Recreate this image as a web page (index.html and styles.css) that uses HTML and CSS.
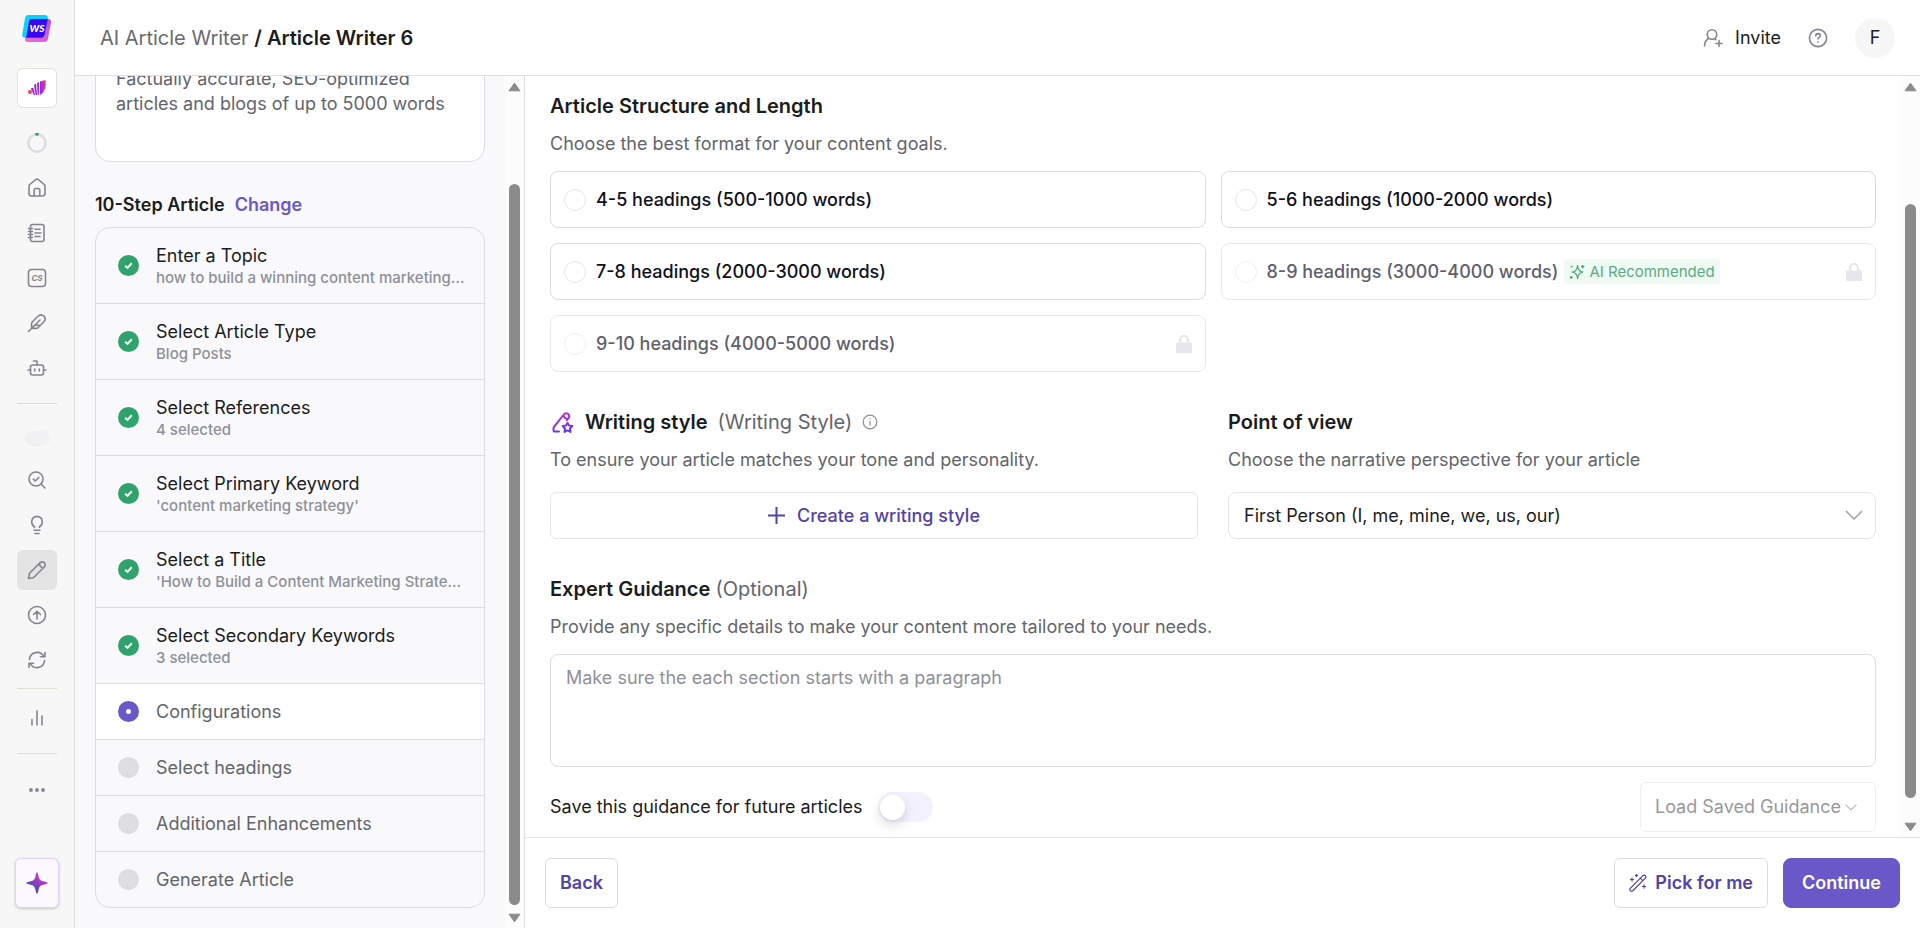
FILE: index.html
```html
<!DOCTYPE html>
<html lang="en">
<head>
<meta charset="utf-8">
<meta name="viewport" content="width=device-width, initial-scale=1">
<title>Article Writer 6</title>
<link rel="stylesheet" href="styles.css">
</head>
<body>
<div class="app">
  <nav class="rail" aria-label="Main">
    <a class="rail-logo" href="#" aria-label="Home page">
      <svg width="30" height="28" viewBox="0 0 30 28">
        <defs>
          <linearGradient id="lp" x1="0" y1="1" x2="1" y2="0"><stop offset="0" stop-color="#f06bd8"/><stop offset="1" stop-color="#c050c8"/></linearGradient>
        </defs>
        <path d="M10 4h16q3.500 0 3 3.500l-3 16q-.5 3.500-4 3.500H6q-3.500 0-3-3.500z" fill="url(#lp)"/>
        <path d="M6.500 0h16q4 0 3.400 3.500l-3 16q-.6 3.300-4 3.300H3.500q-3.800 0-3.200-3.600L3 3.300Q3.600 0 6.500 0z" fill="#0bd0f8"/>
        <path d="M8.500 4h17.300l-3.200 15.700q-.6 3.100-4 3.100H4.200L7 6.500Q7.300 4 8.500 4z" fill="#3a08f5"/>
        <text x="15" y="17" text-anchor="middle" class="logo-text">WS</text>
      </svg>
    </a>
    <a class="rail-brand" href="#" aria-label="Workspace">
      <svg width="18" height="16" viewBox="0 0 18 16">
        <defs><linearGradient id="br" x1="0" y1="0" x2="1" y2="0"><stop offset="0" stop-color="#a020f0"/><stop offset=".4" stop-color="#b52bd0"/><stop offset="1" stop-color="#f0405e"/></linearGradient></defs>
        <circle cx="2" cy="12" r="2" fill="#ee4460"/>
        <path d="M2.800 8.500q2.200-1.500 3.200.5l1 6H6q-1.500-1-1.600-3z" fill="#b02be0"/>
        <path d="M6 4.800l2-1.100 1 11.300H7.700z" fill="#8a22ee"/>
        <path d="M9 3.200l2-1.300v12.600l-1.400.7z" fill="#9a2be6"/>
        <path d="M12 1.400L17.500 0q1 8-1.800 11.500-1.600 2.500-3.700 3.200z" fill="url(#br)"/>
      </svg>
    </a>
    <div class="rail-group">
      <a class="rail-item" href="#" aria-label="Usage">
        <svg width="20" height="20" viewBox="0 0 20 20" fill="none"><circle cx="10" cy="10" r="8.700" stroke="#dddde3" stroke-width="2.600"/><path d="M8.500 1.400q1.500-.2 3 0" stroke="#219e63" stroke-width="2.600"/></svg>
      </a>
      <a class="rail-item" href="#" aria-label="Home">
        <svg class="ico" width="20" height="20" viewBox="0 0 20 20"><path d="M2 8.200q0-1 .8-1.700l5.800-4.800q1.400-1.100 2.800 0l5.800 4.800q.8.700.8 1.700v7.300q0 2.500-2.500 2.500h-11Q2 18 2 15.500zM7.200 18v-6q0-1.500 1.500-1.500h2.600q1.500 0 1.500 1.500v6"/></svg>
      </a>
      <a class="rail-item" href="#" aria-label="Notes">
        <svg class="ico" width="20" height="20" viewBox="0 0 20 20"><rect x="3.500" y="1.500" width="13.500" height="17" rx="2"/><path d="M1.500 5.500h4M1.500 8.500h4M1.500 11.500h4M1.500 14.500h4M8 6.300h5M8 10h6M8 13.500h5"/></svg>
      </a>
      <a class="rail-item" href="#" aria-label="Content strategy">
        <svg width="20" height="20" viewBox="0 0 20 20"><rect class="ico" x="1.500" y="1.500" width="17" height="17" rx="3"/><text x="10" y="13" text-anchor="middle" class="cs-text">CS</text></svg>
      </a>
      <a class="rail-item" href="#" aria-label="Write">
        <svg class="ico" width="20" height="20" viewBox="0 0 20 20"><path d="M1.500 18.500L13 7M4.600 15.400v-4.900q0-.9.600-1.500l6-6q3-2.400 5.700.1 2.400 2.800.1 5.700l-6 6q-.6.600-1.500.6zM7.500 12.300h6"/></svg>
      </a>
      <a class="rail-item" href="#" aria-label="Agent">
        <svg class="ico" width="20" height="20" viewBox="0 0 20 20"><rect x="3.500" y="7" width="13" height="10" rx="2"/><path d="M10 7V3H6.500M1 12h2.500M16.500 12H19M7.700 11v2M12.300 11v2"/></svg>
      </a>
    </div>
    <hr class="rail-rule">
    <div class="rail-pill"></div>
    <div class="rail-group">
      <a class="rail-item" href="#" aria-label="Audit">
        <svg class="ico" width="20" height="20" viewBox="0 0 20 20"><circle cx="9" cy="9" r="7"/><path d="M14 14l4 4M6.300 9.200l2 1.800 3.500-3.500"/></svg>
      </a>
      <a class="rail-item" href="#" aria-label="Ideas">
        <svg class="ico" width="20" height="20" viewBox="0 0 20 20"><path d="M7.500 12.500V11.800Q4.500 10 4.700 6.500 5.300 1.600 10 1.400q4.700.2 5.300 5.100.2 3.500-2.800 5.300v.7M7 15.200h6M8 18.500h4"/></svg>
      </a>
      <a class="rail-item rail-item-active" href="#" aria-label="Article writer">
        <svg class="ico" width="20" height="20" viewBox="0 0 20 20"><path d="M1.500 18.500l.8-4.300q.1-.8.700-1.400L13.200 2.600q2.100-1.600 4.100.1 1.700 2 .1 4.100L7.200 17q-.6.600-1.400.7zM12.500 3.500q.2 4 4 4.200"/></svg>
      </a>
      <a class="rail-item" href="#" aria-label="Publish">
        <svg class="ico" width="20" height="20" viewBox="0 0 20 20"><circle cx="10" cy="10" r="8.500"/><path d="M10 14V6.500M6.500 9.500L10 6.300l3.500 3.200"/></svg>
      </a>
      <a class="rail-item" href="#" aria-label="Refresh">
        <svg class="ico" width="20" height="20" viewBox="0 0 20 20"><path d="M2.500 9.500A7.600 7.600 0 0 1 16.800 6.500M18 2.500v4.300h-4.500M17.500 10.500A7.600 7.600 0 0 1 3.200 13.500M2 17.500v-4.300h4.500"/></svg>
      </a>
    </div>
    <hr class="rail-rule rail-rule-tight">
    <a class="rail-item" href="#" aria-label="Analytics">
      <svg class="ico" width="20" height="20" viewBox="0 0 20 20"><path d="M5 11.500v5.500M10 3v14M15 8v9"/></svg>
    </a>
    <hr class="rail-rule">
    <a class="rail-item" href="#" aria-label="More">
      <svg width="20" height="20" viewBox="0 0 20 20" fill="#85858f"><circle cx="4" cy="10" r="1.900"/><circle cx="10" cy="10" r="1.900"/><circle cx="16" cy="10" r="1.900"/></svg>
    </a>
    <button class="rail-spark" type="button" aria-label="Assistant">
      <svg width="22" height="22" viewBox="0 0 22 22"><defs><linearGradient id="sp" x1=".65" y1=".3" x2=".35" y2=".75"><stop offset="0" stop-color="#c238c4"/><stop offset="1" stop-color="#4b4ab0"/></linearGradient></defs><path d="M11 0q1 1 1.300 3 .6 6 5 6.300 3.500.4 4.700 1.700-1.200 1.300-4.700 1.700-4.400.3-5 6.300Q12 21 11 22q-1-1-1.300-3-.6-6-5-6.300Q1.200 12.300 0 11q1.200-1.300 4.700-1.700 4.400-.3 5-6.300Q10 1 11 0z" fill="url(#sp)"/></svg>
    </button>
  </nav>

  <div class="page">
    <header class="topbar">
      <div class="crumbs"><a class="crumb-link" href="#">AI Article Writer</a> <strong>/ Article Writer 6</strong></div>
      <div class="top-actions">
        <button class="invite" type="button">
          <svg class="ico" width="20" height="20" viewBox="0 0 20 20"><circle cx="9" cy="6.500" r="4.700"/><path d="M1.500 18q0-5 4-7.500M11.500 10.800l1.500.9M16 12.500v6M13 15.500h6"/></svg>
          Invite
        </button>
        <button class="help" type="button" aria-label="Help">
          <svg class="ico" width="20" height="20" viewBox="0 0 20 20"><circle cx="10" cy="10" r="8.600"/><path d="M7.700 7.800q.2-2.100 2.300-2.200 2.200.1 2.300 2 0 1.200-1.200 1.800-1.100.6-1.100 1.600M10 13.900v.2"/></svg>
        </button>
        <button class="avatar" type="button">F</button>
      </div>
    </header>

    <div class="body">
      <aside class="steps-panel">
        <div class="steps-scroll">
          <section class="intro">
            <p>Factually accurate, SEO-optimized articles and blogs of up to 5000 words</p>
          </section>
          <div class="steps-head"><h2>10-Step Article</h2><a href="#">Change</a></div>
          <ol class="steps">
            <li class="step done"><span class="dot"><svg width="21" height="21" viewBox="0 0 21 21"><path d="M7.200 10.700l2.300 2.200 4.300-4.600"/></svg></span><div class="step-text"><b>Enter a Topic</b><small>how to build a winning content marketing...</small></div></li>
            <li class="step done"><span class="dot"><svg width="21" height="21" viewBox="0 0 21 21"><path d="M7.200 10.700l2.300 2.200 4.300-4.600"/></svg></span><div class="step-text"><b>Select Article Type</b><small>Blog Posts</small></div></li>
            <li class="step done"><span class="dot"><svg width="21" height="21" viewBox="0 0 21 21"><path d="M7.200 10.700l2.300 2.200 4.300-4.600"/></svg></span><div class="step-text"><b>Select References</b><small>4 selected</small></div></li>
            <li class="step done"><span class="dot"><svg width="21" height="21" viewBox="0 0 21 21"><path d="M7.200 10.700l2.300 2.200 4.300-4.600"/></svg></span><div class="step-text"><b>Select Primary Keyword</b><small>'content marketing strategy'</small></div></li>
            <li class="step done"><span class="dot"><svg width="21" height="21" viewBox="0 0 21 21"><path d="M7.200 10.700l2.300 2.200 4.300-4.600"/></svg></span><div class="step-text"><b>Select a Title</b><small>'How to Build a Content Marketing Strate...</small></div></li>
            <li class="step done"><span class="dot"><svg width="21" height="21" viewBox="0 0 21 21"><path d="M7.200 10.700l2.300 2.200 4.300-4.600"/></svg></span><div class="step-text"><b>Select Secondary Keywords</b><small>3 selected</small></div></li>
            <li class="step current"><span class="dot"></span><div class="step-text"><b>Configurations</b></div></li>
            <li class="step"><span class="dot"></span><div class="step-text"><b>Select headings</b></div></li>
            <li class="step"><span class="dot"></span><div class="step-text"><b>Additional Enhancements</b></div></li>
            <li class="step"><span class="dot"></span><div class="step-text"><b>Generate Article</b></div></li>
          </ol>
        </div>
        <div class="scrollbar" aria-hidden="true">
          <svg width="13" height="10" viewBox="0 0 13 10"><path d="M6.500 1.200L12 8.800H1z"/></svg>
          <div class="track"><div class="thumb thumb-steps"></div></div>
          <svg width="13" height="10" viewBox="0 0 13 10"><path d="M6.500 8.800L12 1.200H1z"/></svg>
        </div>
      </aside>

      <main class="main">
        <div class="main-view">
          <form class="config">
            <section class="block" role="radiogroup" aria-labelledby="h-structure">
              <h2 id="h-structure">Article Structure and Length</h2>
              <p class="desc">Choose the best format for your content goals.</p>
              <div class="options">
                <label class="option"><input type="radio" name="len">4-5 headings (500-1000 words)</label>
                <label class="option"><input type="radio" name="len">5-6 headings (1000-2000 words)</label>
                <label class="option"><input type="radio" name="len">7-8 headings (2000-3000 words)</label>
                <label class="option locked"><input type="radio" name="len" disabled>8-9 headings (3000-4000 words)
                  <span class="tag"><svg width="16" height="16" viewBox="0 0 14 14"><path d="M7.500 1.500q.4 4.900 4.700 5.500Q7.900 7.700 7.500 12.700 7 7.700 2.800 7 7 6.400 7.500 1.500zM12 .8v3M10.500 2.300h3M2.300 1.500v1.600M1.500 2.300h1.600M2 10.500v2.400M.8 11.700h2.400"/></svg>AI Recommended</span>
                  <svg class="lock" width="16" height="18" viewBox="0 0 16 18"><path d="M4 8V5q.4-4 4-4t4 4v3" fill="none" stroke="#e6e6eb" stroke-width="2"/><rect y="7.500" width="16" height="10.500" rx="1"/></svg></label>
                <label class="option locked"><input type="radio" name="len" disabled>9-10 headings (4000-5000 words)
                  <svg class="lock" width="16" height="18" viewBox="0 0 16 18"><path d="M4 8V5q.4-4 4-4t4 4v3" fill="none" stroke="#e6e6eb" stroke-width="2"/><rect y="7.500" width="16" height="10.500" rx="1"/></svg></label>
              </div>
            </section>

            <div class="pair">
              <section class="block">
                <h2 class="style-title">
                  <svg width="25" height="24" viewBox="0 0 25 24" fill="none" stroke="url(#pen)" stroke-width="2" stroke-linejoin="round" stroke-linecap="round"><defs><linearGradient id="pen" x1="0" y1="0" x2="0" y2="24" gradientUnits="userSpaceOnUse"><stop offset="0" stop-color="#c233c8"/><stop offset="1" stop-color="#5b36e8"/></linearGradient></defs><path d="M9 21.500H4.500q-1 0-1-1.300v-1.700q0-1.200.9-2.100L14.200 4q2.200-1.600 4.200.1 1.700 2 .2 4l-1.600 2M13.500 5.500q.7 2.600 3.800 3.600"/><path d="M17.500 12.700l1.500 2.900 3.300.5-2.300 2.400.5 3.400-3-1.500-3 1.500.5-3.400-2.300-2.400 3.300-.5z"/></svg>
                  Writing style <span class="soft">(Writing Style)</span>
                  <svg width="16" height="16" viewBox="0 0 16 16" fill="none" stroke="#8d8d96" stroke-width="1.200"><circle cx="8" cy="8" r="6.800"/><path d="M8 7v4.500M8 4.300v1.200"/></svg>
                </h2>
                <p class="desc desc-wide">To ensure your article matches your tone and personality.</p>
                <button class="create" type="button"><svg width="17" height="17" viewBox="0 0 17 17"><path d="M8.500 0v17M0 8.500h17"/></svg>Create a writing style</button>
              </section>
              <section class="block">
                <h2><label for="pov">Point of view</label></h2>
                <p class="desc desc-wide">Choose the narrative perspective for your article</p>
                <div class="select-wrap">
                  <select id="pov"><option>First Person (I, me, mine, we, us, our)</option></select>
                  <svg class="select-arrow" width="18" height="10" viewBox="0 0 18 10"><path d="M1 1l8 8 8-8"/></svg>
                </div>
              </section>
            </div>

            <section class="block">
              <h2><label for="guide">Expert Guidance</label> <span class="soft">(Optional)</span></h2>
              <p class="desc">Provide any specific details to make your content more tailored to your needs.</p>
              <textarea id="guide" placeholder="Make sure the each section starts with a paragraph"></textarea>
              <div class="save-row">
                <label class="save">Save this guidance for future articles<input class="switch" type="checkbox" role="switch"></label>
                <button class="load" type="button" disabled>Load Saved Guidance<svg width="12" height="7" viewBox="0 0 12 7"><path d="M.6.600L6 6 11.400.6"/></svg></button>
              </div>
            </section>
          </form>
          <div class="scrollbar" aria-hidden="true">
            <svg width="13" height="10" viewBox="0 0 13 10"><path d="M6.500 1.200L12 8.800H1z"/></svg>
            <div class="track"><div class="thumb thumb-main"></div></div>
            <svg width="13" height="10" viewBox="0 0 13 10"><path d="M6.500 8.800L12 1.200H1z"/></svg>
          </div>
        </div>
        <footer class="actions">
          <button class="btn" type="button">Back</button>
          <div class="actions-right">
            <button class="btn" type="button"><svg class="wand" width="18" height="18" viewBox="0 0 18 18"><path d="M1.300 14.300L13.800 1.600q1.400-1 2.600.1 1 1.200 0 2.500L3.800 16.700q-1.300 1-2.500 0-1-1.200 0-2.400zM11.300 4.200l2.500 2.500"/><path d="M7.500 0v3M6 1.500h3M3 3.500v4M1 5.500h4M15 10.500v4M13 12.500h4"/></svg>Pick for me</button>
            <button class="btn btn-primary" type="button">Continue</button>
          </div>
        </footer>
      </main>
    </div>
  </div>
</div>
</body>
</html>
```
FILE: styles.css
```css
* { box-sizing: border-box; }
body {
  margin: 0;
  font-family: Inter, "Liberation Sans", sans-serif;
  font-size: 18px;
  line-height: 24px;
  color: #1b1c20;
  background: #fff;
}
h2, p, ol { margin: 0; padding: 0; }
h2 { font-size: 20px; line-height: 30px; font-weight: 600; }
button, select, textarea, input { font: inherit; color: inherit; margin: 0; }
button { cursor: pointer; }
a { text-decoration: none; color: inherit; }
svg { display: block; flex: none; }
.ico { fill: none; stroke: #85858f; stroke-width: 1.6; stroke-linecap: round; stroke-linejoin: round; }

.app { display: flex; height: 100vh; overflow: hidden; }

/* icon rail */
.rail {
  flex: none;
  width: 75px;
  display: flex;
  flex-direction: column;
  align-items: center;
  padding: 15px 0 20px;
  background: #f7f7f7;
  border-right: 1px solid #dedfd6;
}
.logo-text { font: italic 900 10px Lato, sans-serif; fill: #fff; }
.cs-text { font: italic 700 8px Inter, sans-serif; fill: #85858f; }
.rail-brand {
  width: 40px;
  height: 40px;
  margin: 25px 0 12px;
  display: grid;
  place-items: center;
  background: #fff;
  border: 1px solid #e2e2d8;
  border-radius: 6px;
}
.rail-item { display: grid; place-items: center; width: 40px; height: 45px; }
.rail-item-active { height: 40px; margin: 3px 0 2px; background: #e4e4e4; border-radius: 6px; }
.rail-rule { flex: none; width: 40px; height: 1px; margin: 13px 0; border: 0; background: #dedfd0; }
.rail-rule-tight { margin: 6px 0; }
.rail-pill { flex: none; width: 25px; height: 15px; margin: 14px 0 11px; border-radius: 8px; background: #f1f1f3; }
.rail-spark {
  width: 44px;
  height: 50px;
  margin-top: auto;
  display: grid;
  place-items: center;
  padding: 0;
  background: #fcf8ff;
  border: 1px solid #e3d0fb;
  border-radius: 6px;
  box-shadow: 0 1px 3px rgba(0, 0, 0, .2);
}

.page { flex: 1; min-width: 0; display: flex; flex-direction: column; }
.topbar {
  flex: none;
  height: 76px;
  display: flex;
  align-items: center;
  justify-content: space-between;
  padding: 0 25px;
  border-bottom: 1px solid #dedfdb;
}
.crumbs { font-size: 20px; }
.crumbs strong { font-weight: 600; }
.crumb-link { color: #6a6b70; }
.top-actions { display: flex; align-items: center; gap: 27px; }
.invite, .help { display: flex; align-items: center; gap: 12px; padding: 0; background: none; border: 0; }
.avatar { width: 40px; height: 40px; padding: 0; border: 0; border-radius: 50%; background: #f6f6f6; }

.body { flex: 1; min-height: 0; display: flex; }

/* steps */
.steps-panel { flex: none; width: 450px; display: flex; background: #f9f9fc; border-right: 1px solid #dcdcdf; }
.steps-scroll {
  flex: 1;
  min-width: 0;
  display: flex;
  flex-direction: column;
  justify-content: flex-end;
  overflow: hidden;
  padding: 0 20px 20px;
}
.intro {
  flex: none;
  padding: 20px 20px 45px;
  background: #fff;
  border: 1px solid #dddde1;
  border-radius: 15px;
  color: #63656c;
  line-height: 25px;
}
.steps-head { flex: none; display: flex; align-items: center; gap: 10px; height: 25px; margin: 30px 0 10px; font-weight: 600; }
.steps-head h2 { font-size: 18px; line-height: 25px; }
.steps-head a { color: #6a57c8; }
.steps { flex: none; list-style: none; border: 1px solid #dddde1; border-radius: 15px; overflow: hidden; }
.step { display: flex; align-items: center; gap: 17px; height: 56px; padding: 0 15px 0 22px; border-bottom: 1px solid #dddde1; color: #63656c; }
.step:last-child { height: 55px; border-bottom: 0; }
.step.done { height: 76px; color: #1b1c20; }
.step.current { background: #fff; }
.step-text { min-width: 0; }
.step b { display: block; font-weight: 400; }
.step small { display: block; font-size: 15px; line-height: 20px; font-weight: 500; color: #8e909a; white-space: nowrap; }
.dot { flex: none; display: grid; place-items: center; width: 21px; height: 21px; border-radius: 50%; background: #dddde2; }
.done .dot { background: #2fa36b; }
.done .dot path { fill: none; stroke: #fff; stroke-width: 2; }
.current .dot { background: #6a57c8; }
.current .dot::after { content: ""; width: 5px; height: 5px; border-radius: 50%; background: #fff; }

/* scrollbars */
.scrollbar { flex: none; width: 19px; display: flex; flex-direction: column; align-items: center; gap: 5px; padding: 6px 0 5px; background: #fcfcfc; }
.scrollbar path { fill: #8b8b8b; stroke: #8b8b8b; stroke-width: 1; stroke-linejoin: round; }
.track { flex: 1; width: 11px; display: flex; flex-direction: column; }
.thumb { flex: 1; border-radius: 6px; background: #8b8b8b; }
.thumb-steps { margin: 87px 0 3px; }
.thumb-main { margin: 107px 0 19px; }

/* main */
.main { flex: 1; min-width: 0; display: flex; flex-direction: column; }
.main-view { flex: 1; min-height: 0; display: flex; }
.config { flex: 1; min-width: 0; overflow: hidden; display: flex; flex-direction: column; gap: 35px; padding: 15px 25px 0; }
.desc { margin: 8px 0 12px; line-height: 30px; color: #63656c; }
.desc-wide { margin-bottom: 17px; }
.soft { font-weight: 400; color: #63656c; }
.options { display: grid; grid-template-columns: 1fr 1fr; gap: 15px; }
.option {
  display: flex;
  align-items: center;
  gap: 10px;
  height: 57px;
  padding: 0 13px;
  border: 1px solid #dcdcdf;
  border-radius: 8px;
  font-weight: 500;
  color: #0f1020;
}
.option input { appearance: none; width: 22px; height: 22px; border: 1px solid #e6e6ea; border-radius: 50%; background: #fff; flex: none; }
.option.locked { border-color: #e9e9ec; color: #5f606c; }
.locked input { border-color: #f0f0f3; }
.tag { display: flex; align-items: center; gap: 4px; height: 25px; padding: 0 5px; margin-left: -4px; border-radius: 4px; background: #effaf3; color: #5aab84; font-size: 15px; font-weight: 400; }
.tag path { fill: none; stroke: #45a374; stroke-width: 1.1; stroke-linejoin: round; }
.lock { margin-left: auto; fill: #e6e6eb; }
.pair { display: grid; grid-template-columns: 1fr 1fr; gap: 30px; }
.style-title { display: flex; align-items: center; gap: 10px; }
.create {
  width: 100%;
  height: 47px;
  display: flex;
  align-items: center;
  justify-content: center;
  gap: 12px;
  background: #fff;
  border: 1px solid #e4e4e9;
  border-radius: 6px;
  font-weight: 500;
  color: #5342a8;
}
.create path { stroke: #5342a8; stroke-width: 2; }
.select-wrap { position: relative; }
.select-wrap select { appearance: none; display: block; width: 100%; height: 47px; padding: 0 15px; border: 1px solid #e4e4e9; border-radius: 8px; background: #fff; }
.select-arrow { position: absolute; right: 13px; top: 18px; pointer-events: none; }
.select-arrow path { fill: none; stroke: #a0a3ad; stroke-width: 1.5; }
textarea { display: block; width: 100%; height: 113px; padding: 11px 15px; border: 1px solid #dcdce1; border-radius: 8px; resize: none; }
textarea::placeholder { color: #8e909a; opacity: 1; }
.save-row { display: flex; align-items: center; justify-content: space-between; margin-top: 15px; }
.save { display: flex; align-items: center; gap: 15px; }
.switch { appearance: none; display: flex; align-items: center; width: 55px; height: 30px; padding: 0 2px; border-radius: 15px; background: #f3f1fe; }
.switch::before { content: ""; width: 25px; height: 25px; border-radius: 50%; background: #fff; box-shadow: 0 5px 12px rgba(0, 0, 0, .15); }
.load { display: flex; align-items: center; gap: 4px; height: 50px; padding: 0 18px 0 14px; background: #fff; border: 1px solid #eeeeef; border-radius: 6px; color: #98999b; }
.load path { fill: none; stroke: #b9b9bc; stroke-width: 1.2; }

.actions { flex: none; display: flex; align-items: center; justify-content: space-between; height: 91px; padding: 0 20px; border-top: 1px solid #e3e3e6; }
.actions-right { display: flex; gap: 15px; }
.btn { display: flex; align-items: center; gap: 8px; height: 50px; padding: 0 14px; background: #fff; border: 1px solid #dcdcdf; border-radius: 6px; font-weight: 600; color: #5342a8; }
.btn-primary { padding: 0 18px; background: #6a57c8; border-color: #6a57c8; border-radius: 8px; color: #fff; }
.wand { fill: none; stroke: #5342a8; stroke-width: 1.2; }
```
